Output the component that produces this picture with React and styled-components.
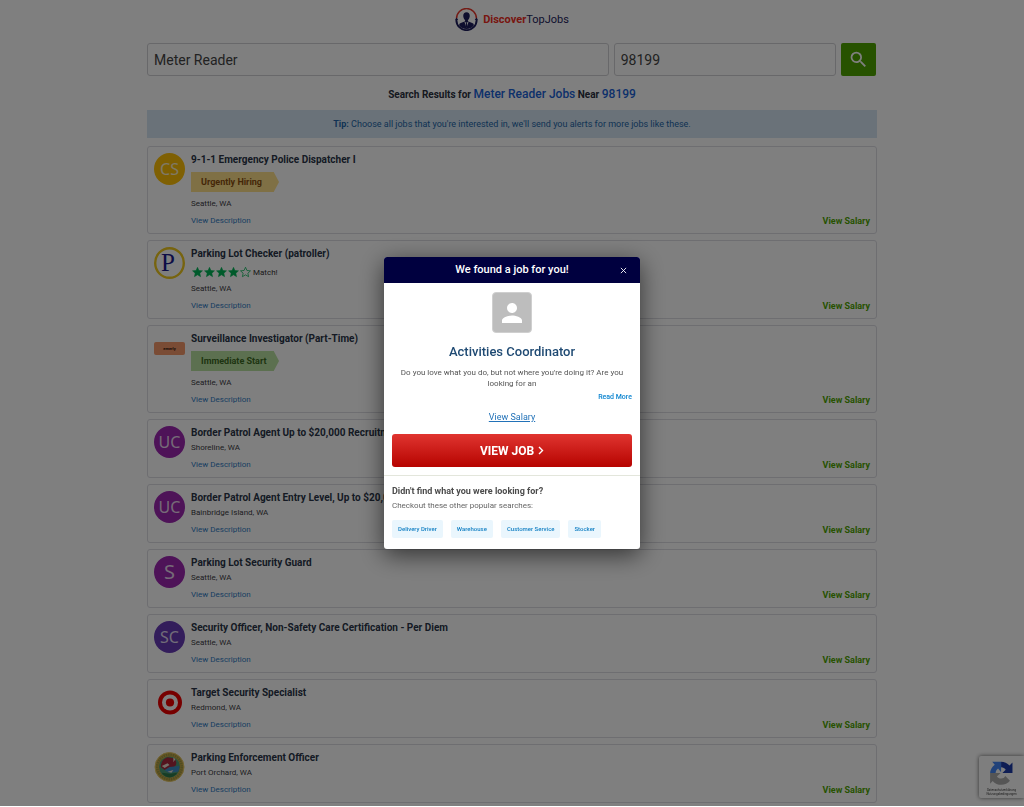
import React, { useState } from 'react'
import styled, { createGlobalStyle } from 'styled-components'

const GlobalStyle = createGlobalStyle`
    *{
        box-sizing:border-box;
    }
    body{
        margin:0;
        background:#fff;
        color:#333;
        font-family:Roboto, "Liberation Sans", sans-serif;
        overflow:hidden;
    }
    a{
        text-decoration:none;
    }
    button, input{
        font-family:inherit;
    }
`

const Page = styled.main`
    width:100%;
    max-width:730px;
    height:100vh;
    margin:0 auto;
    overflow:hidden;
`

const Header = styled.header`
    display:flex;
    justify-content:center;
    padding:7px 0 12px;
`

const Brand = styled.a`
    display:flex;
    align-items:center;
    gap:5px;
    height:24px;
    font-size:11px;
    font-weight:400;
    color:#1d1d5c;
    svg{
        width:23px;
        height:23px;
    }
    strong{
        font-weight:700;
        color:#f02c22;
    }
`

const SearchForm = styled.form`
    display:flex;
    gap:5px;
    padding-right:1px;
`

const SearchInput = styled.input`
    flex:${({grow}) => grow || 1} 1 0;
    min-width:0;
    height:33px;
    padding:0 6px;
    border:1px solid #d0d0d4;
    border-radius:3px;
    background:#fff;
    color:#444;
    font-size:14px;
`

const SearchButton = styled.button`
    display:flex;
    align-items:center;
    justify-content:center;
    width:35px;
    height:33px;
    padding:0;
    border:0;
    border-radius:2px;
    background:#4ea500;
    cursor:pointer;
    svg{
        width:21px;
        height:21px;
    }
`

const ResultsTitle = styled.h1`
    margin:10px 0 7px;
    font-size:10px;
    line-height:16px;
    font-weight:700;
    text-align:center;
    color:#2b3140;
    span{
        font-size:12px;
        font-weight:500;
        color:#1a62d6;
    }
`

const Tip = styled.p`
    margin:0 0 8px;
    padding:8px;
    background:#d4e5f2;
    color:#2365a8;
    font-size:9px;
    line-height:12px;
    text-align:center;
    strong{
        font-weight:700;
    }
`

const JobList = styled.ul`
    display:flex;
    flex-direction:column;
    gap:6px;
    margin:0;
    padding:0;
    list-style:none;
`

const JobCard = styled.li`
    display:flex;
    gap:6px;
    padding:5px 6px 6px;
    border:1px solid #dcdce2;
    border-radius:3px;
`

const LogoSlot = styled.div`
    display:flex;
    align-items:center;
    justify-content:center;
    flex:none;
    width:31px;
    height:32px;
    margin-top:1px;
`

const Avatar = styled.div`
    display:flex;
    align-items:center;
    justify-content:center;
    width:100%;
    height:100%;
    border-radius:50%;
    background:${({color}) => color};
    color:#ffffffd0;
    font-family:"Noto Sans", sans-serif;
    font-size:${({single}) => single ? '20px' : '16px'};
    font-weight:400;
    line-height:1;
`

const JobBody = styled.div`
    display:flex;
    flex-direction:column;
    flex:1;
    min-width:0;
`

const JobTitle = styled.h2`
    margin:0;
    font-size:10px;
    line-height:16px;
    font-weight:700;
    color:#2a3548;
`

const Badge = styled.div`
    width:88px;
    height:20px;
    margin:4px 0 5px;
    padding-left:10px;
    clip-path:polygon(0 0, 94% 0, 100% 50%, 94% 100%, 0 100%);
    font-size:9px;
    line-height:20px;
    font-weight:700;
    background:${({kind}) => kind === 'urgent' ? '#ffe08a' : '#b9e0a0'};
    color:${({kind}) => kind === 'urgent' ? '#8a4f10' : '#3c6a24'};
`

const Match = styled.div`
    display:flex;
    align-items:center;
    height:12px;
    margin:4px 0 4px;
    font-size:8px;
    color:#333;
    svg{
        width:12px;
        height:12px;
    }
    span{
        margin-left:2px;
    }
`

const Location = styled.div`
    margin-top:1px;
    font-size:8px;
    line-height:12px;
    color:#3c3c44;
`

const DescriptionLink = styled.a`
    align-self:flex-start;
    margin-top:5px;
    font-size:8px;
    line-height:12px;
    color:#2f7cc4;
`

const SalaryLink = styled.a`
    align-self:flex-end;
    font-size:9px;
    line-height:12px;
    font-weight:700;
    color:#4ea500;
`

const Captcha = styled.aside`
    position:fixed;
    right:0;
    bottom:9px;
    display:flex;
    flex-direction:column;
    align-items:center;
    width:45px;
    height:42px;
    padding-top:4px;
    border-radius:2px 0 0 2px;
    background:#fcfcfc;
    box-shadow:0 0 4px #666;
    color:#444;
    font-size:3px;
    line-height:4px;
    text-align:center;
    svg{
        width:27px;
        height:27px;
        margin-bottom:1px;
    }
`

const Overlay = styled.div`
    position:fixed;
    top:0;
    left:0;
    right:0;
    bottom:1px;
    z-index:100;
    display:flex;
    align-items:center;
    justify-content:center;
    background:#00000080;
`

const Dialog = styled.section`
    width:25%;
    min-width:256px;
    border-radius:3px;
    background:#fff;
    box-shadow:0 6px 24px #00000099;
    overflow:hidden;
`

const DialogHeader = styled.div`
    display:grid;
    grid-template-columns:24px 1fr 24px;
    align-items:center;
    height:26px;
    padding-right:5px;
    padding-left:5px;
    background:#00003f;
    h2{
        grid-column:2;
        margin:0;
        font-size:11px;
        line-height:16px;
        font-weight:500;
        color:#fff;
        text-align:center;
    }
`

const CloseButton = styled.button`
    display:flex;
    align-items:center;
    justify-content:center;
    height:20px;
    padding:0;
    border:0;
    background:none;
    cursor:pointer;
    svg{
        width:7px;
        height:7px;
    }
`

const Offer = styled.div`
    display:flex;
    flex-direction:column;
    align-items:center;
    padding:9px 8px 8px;
    border-bottom:1px solid #e3e6dc;
    h3{
        margin:10px 0 6px;
        font-size:13px;
        line-height:18px;
        font-weight:500;
        color:#1f4a73;
    }
    p{
        margin:0;
        font-size:8px;
        line-height:11px;
        text-align:center;
        color:#555;
    }
`

const Placeholder = styled.div`
    display:flex;
    align-items:center;
    justify-content:center;
    width:40px;
    height:41px;
    border:1px solid #cfcfcf;
    border-radius:4px;
    background:#bdbdbd;
    svg{
        width:30px;
        height:30px;
    }
`

const ReadMore = styled.a`
    align-self:flex-end;
    margin-top:3px;
    font-size:7px;
    line-height:10px;
    font-weight:500;
    color:#0b84d0;
`

const OfferSalary = styled.a`
    margin:9px 0 11px;
    font-size:9px;
    line-height:12px;
    color:#2272b8;
    text-decoration:underline;
`

const ViewJob = styled.button`
    display:flex;
    align-items:center;
    justify-content:center;
    gap:4px;
    width:100%;
    height:33px;
    padding:0;
    border:0;
    border-radius:3px;
    background:linear-gradient(#e03530, #b60300);
    color:#fff;
    font-size:12px;
    font-weight:700;
    cursor:pointer;
    svg{
        width:6px;
        height:9px;
    }
`

const MoreSearches = styled.div`
    padding:8px 8px 11px;
    h4{
        margin:0 0 2px;
        font-size:9px;
        line-height:14px;
        font-weight:700;
        color:#4c4c4c;
    }
    p{
        margin:0 0 8px;
        font-size:8px;
        line-height:12px;
        color:#666;
    }
`

const Tags = styled.div`
    display:flex;
    gap:8px;
`

const Tag = styled.a`
    padding:0 6px;
    border-radius:2px;
    background:#eaf6fd;
    color:#1581c4;
    font-size:6px;
    font-weight:500;
    line-height:18px;
`

const BrandMark = () => (
    <svg viewBox="0 0 24 24" aria-hidden="true">
        <path d="M1.6 11A10.4 10.4 0 0 1 22.4 11" fill="none" stroke="#e8392c" strokeWidth="1.6" />
        <path d="M1.4 12.5A10.6 10.6 0 0 0 22.6 12.5" fill="none" stroke="#1d1d5c" strokeWidth="2" />
        <path d="M0 12.5l1.6-2.6 1.8 2.6zM20.6 12.5l1.8-2.6 1.6 2.6z" fill="#1d1d5c" />
        <path d="M12 4.4c2.2 0 3.5 1.6 3.4 3.9-.1 2-1 3.6-1.9 4.3v1.1l5 2.2c.8.4 1.1 1.2 1.2 2.1A9.8 9.8 0 0 1 12 22a9.8 9.8 0 0 1-7.7-4c.1-.9.4-1.7 1.2-2.1l5-2.2v-1.1c-.9-.7-1.8-2.3-1.9-4.3C8.5 6 9.8 4.4 12 4.4z" fill="#1d1d5c" />
        <path d="M9.8 14.2L12 21l2.2-6.8-2.2 1.5z" fill="#fff" />
        <path d="M11.5 15.6h1l.6 3.4-1.1 2.2-1.1-2.2z" fill="#1d1d5c" />
    </svg>
)

const SearchIcon = () => (
    <svg viewBox="0 0 24 24" aria-hidden="true">
        <path fill="#fff" d="M15.5 14h-.79l-.28-.27A6.471 6.471 0 0 0 16 9.5 6.5 6.5 0 1 0 9.5 16c1.61 0 3.09-.59 4.23-1.57l.27.28v.79l5 4.99L20.49 19l-4.99-5zm-6 0C7.01 14 5 11.99 5 9.5S7.01 5 9.5 5 14 7.01 14 9.5 11.99 14 9.5 14z" />
    </svg>
)

const Star = ({filled}) => (
    <svg viewBox="0 0 24 24" aria-hidden="true">
        <path
            d="M13 2.5l2.9 6.5 7.1.7-5.3 4.7 1.5 7L13 17.7 6.8 21.4l1.5-7L3 9.7l7.1-.7z"
            fill={filled ? '#00b456' : 'none'}
            stroke="#00b456"
            strokeWidth={filled ? 1 : 1.5}
        />
    </svg>
)

const ParkingLogo = () => (
    <svg width="31" height="32" viewBox="0 0 31 32" aria-hidden="true">
        <ellipse cx="15.5" cy="16" rx="14.3" ry="14.8" fill="#fff" stroke="#efc81e" strokeWidth="2.4" />
        <text x="14" y="24" textAnchor="middle" fontFamily="Liberation Serif, serif" fontSize="25" fill="#1a1a8c">P</text>
    </svg>
)

const OrangeLogo = () => (
    <svg width="31" height="13" viewBox="0 0 31 13" aria-hidden="true">
        <rect width="31" height="13" rx="2" fill="#f5986a" />
        <text x="15.5" y="8" textAnchor="middle" fontFamily="Roboto, sans-serif" fontSize="4" fontWeight="700" fill="#2a1208">emerly</text>
    </svg>
)

const TargetLogo = () => (
    <svg width="24" height="25" viewBox="0 0 24 24" aria-hidden="true">
        <circle cx="12" cy="12" r="12" fill="#e00" />
        <circle cx="12" cy="12" r="8" fill="#fff" />
        <circle cx="12" cy="12" r="4.1" fill="#e00" />
    </svg>
)

const SealLogo = () => (
    <svg width="31" height="32" viewBox="0 0 32 32" aria-hidden="true">
        <circle cx="16" cy="16" r="15" fill="#c9a648" stroke="#e2c765" strokeWidth="1" />
        <circle cx="16" cy="16" r="12.6" fill="none" stroke="#9c9a40" strokeWidth="2.6" strokeDasharray="1.4 1" />
        <circle cx="16" cy="16" r="10.8" fill="#4f9c78" />
        <path d="M7 16c0-5 3-9 7-10l6 1c3 2 4 5 2 8l-5 3-6 1z" fill="#a8283c" />
        <path d="M11 19l5-3 10-1c.4 3-.6 5-2 6l-9 1z" fill="#3f8fc8" />
        <path d="M8 22l9 1 7-1a10 10 0 0 1-8 4.8A10 10 0 0 1 8 22z" fill="#2f7a4a" />
        <path d="M8 15l6-3 2 2-5 3zM14 21l6-2-2 3zM20 6l2 2-2 3z" fill="#e8dfd0" />
    </svg>
)

const CaptchaMark = () => (
    <svg viewBox="0 0 64 64" aria-hidden="true">
        <path d="M58 31V6l-7 7A27 27 0 0 0 31 4v13c5 0 9 3 11 6l-8 8z" fill="#1c3aa9" />
        <path d="M31 4H10l6 7A27 27 0 0 0 5 31h13c0-5 3-9 6-11l7 9z" fill="#4285f4" />
        <path d="M5 31v25l6-6a27 27 0 0 0 41-1L41 38c-2 4-5 6-10 6-4 0-8-2-10-5l9-8z" fill="#ababab" />
    </svg>
)

const LOGOS = {
    parking: ParkingLogo,
    orange: OrangeLogo,
    target: TargetLogo,
    seal: SealLogo,
}

const JOBS = [
    { title: '9-1-1 Emergency Police Dispatcher I', city: 'Seattle, WA', initials: 'CS', color: '#ffc107', badge: 'Urgently Hiring', kind: 'urgent' },
    { title: 'Parking Lot Checker (patroller)', city: 'Seattle, WA', logo: 'parking', stars: 4 },
    { title: 'Surveillance Investigator (Part-Time)', city: 'Seattle, WA', logo: 'orange', badge: 'Immediate Start', kind: 'immediate' },
    { title: 'Border Patrol Agent Up to $20,000 Recruitment', city: 'Shoreline, WA', initials: 'UC', color: '#9c27b0' },
    { title: 'Border Patrol Agent Entry Level, Up to $20,000', city: 'Bainbridge Island, WA', initials: 'UC', color: '#9c27b0' },
    { title: 'Parking Lot Security Guard', city: 'Seattle, WA', initials: 'S', color: '#9c27b0' },
    { title: 'Security Officer, Non-Safety Care Certification - Per Diem', city: 'Seattle, WA', initials: 'SC', color: '#673ab7' },
    { title: 'Target Security Specialist', city: 'Redmond, WA', logo: 'target' },
    { title: 'Parking Enforcement Officer', city: 'Port Orchard, WA', logo: 'seal' },
]

const SEARCHES = ['Delivery Driver', 'Warehouse', 'Customer Service', 'Stocker']

const Job = ({job}) => {
    const Logo = LOGOS[job.logo]
    return (
        <JobCard>
            <LogoSlot>
                {Logo ? <Logo /> : <Avatar color={job.color} single={job.initials.length === 1 ? 1 : undefined}>{job.initials}</Avatar>}
            </LogoSlot>
            <JobBody>
                <JobTitle>{job.title}</JobTitle>
                {job.badge && <Badge kind={job.kind}>{job.badge}</Badge>}
                {job.stars && (
                    <Match>
                        {[1, 2, 3, 4, 5].map((n) => <Star key={n} filled={n <= job.stars} />)}
                        <span>Match!</span>
                    </Match>
                )}
                <Location>{job.city}</Location>
                <DescriptionLink href="#description">View Description</DescriptionLink>
            </JobBody>
            <SalaryLink href="#salary">View Salary</SalaryLink>
        </JobCard>
    )
}

const JobModal = ({isOpen, closeNow}) => {
    if (!isOpen) return null
    return (
        <Overlay>
            <Dialog role="dialog" aria-modal="true" aria-labelledby="modal-title">
                <DialogHeader>
                    <h2 id="modal-title">We found a job for you!</h2>
                    <CloseButton type="button" aria-label="Close" onClick={closeNow}>
                        <svg viewBox="0 0 8 8"><path d="M1 1l6 6M7 1L1 7" stroke="#fff" strokeWidth="1" /></svg>
                    </CloseButton>
                </DialogHeader>
                <Offer>
                    <Placeholder>
                        <svg viewBox="0 0 24 24" aria-hidden="true">
                            <path fill="#fff" d="M12 12c2.21 0 4-1.79 4-4s-1.79-4-4-4-4 1.79-4 4 1.79 4 4 4zm0 2c-2.67 0-8 1.34-8 4v2h16v-2c0-2.66-5.33-4-8-4z" />
                        </svg>
                    </Placeholder>
                    <h3>Activities Coordinator</h3>
                    <p>Do you love what you do, but not where you're doing it? Are you looking for an</p>
                    <ReadMore href="#more">Read More</ReadMore>
                    <OfferSalary href="#salary">View Salary</OfferSalary>
                    <ViewJob type="button">
                        VIEW JOB
                        <svg viewBox="0 0 6 9" aria-hidden="true"><path d="M1 1l3.5 3.5L1 8" fill="none" stroke="#fff" strokeWidth="1.4" /></svg>
                    </ViewJob>
                </Offer>
                <MoreSearches>
                    <h4>Didn't find what you were looking for?</h4>
                    <p>Checkout these other popular searches:</p>
                    <Tags>
                        {SEARCHES.map((name) => <Tag key={name} href="#search">{name}</Tag>)}
                    </Tags>
                </MoreSearches>
            </Dialog>
        </Overlay>
    )
}

const App = () => {
    const [open, setOpen] = useState(true)
    return (
        <>
            <GlobalStyle />
            <Page>
                <Header>
                    <Brand href="#home">
                        <BrandMark />
                        <span><strong>Discover</strong>TopJobs</span>
                    </Brand>
                </Header>
                <SearchForm onSubmit={(e) => e.preventDefault()}>
                    <SearchInput grow={2.15} aria-label="Job title" defaultValue="Meter Reader" />
                    <SearchInput aria-label="Zip code" defaultValue="98199" />
                    <SearchButton type="submit" aria-label="Search"><SearchIcon /></SearchButton>
                </SearchForm>
                <ResultsTitle>Search Results for <span>Meter Reader Jobs</span> Near <span>98199</span></ResultsTitle>
                <Tip><strong>Tip:</strong> Choose all jobs that you're interested in, we'll send you alerts for more jobs like these.</Tip>
                <JobList>
                    {JOBS.map((job) => <Job key={job.title} job={job} />)}
                </JobList>
            </Page>
            <Captcha>
                <CaptchaMark />
                <div>Datenschutzerklärung</div>
                <div>Nutzungsbedingungen</div>
            </Captcha>
            <JobModal isOpen={open} closeNow={() => setOpen(false)} />
        </>
    )
}

export default App
